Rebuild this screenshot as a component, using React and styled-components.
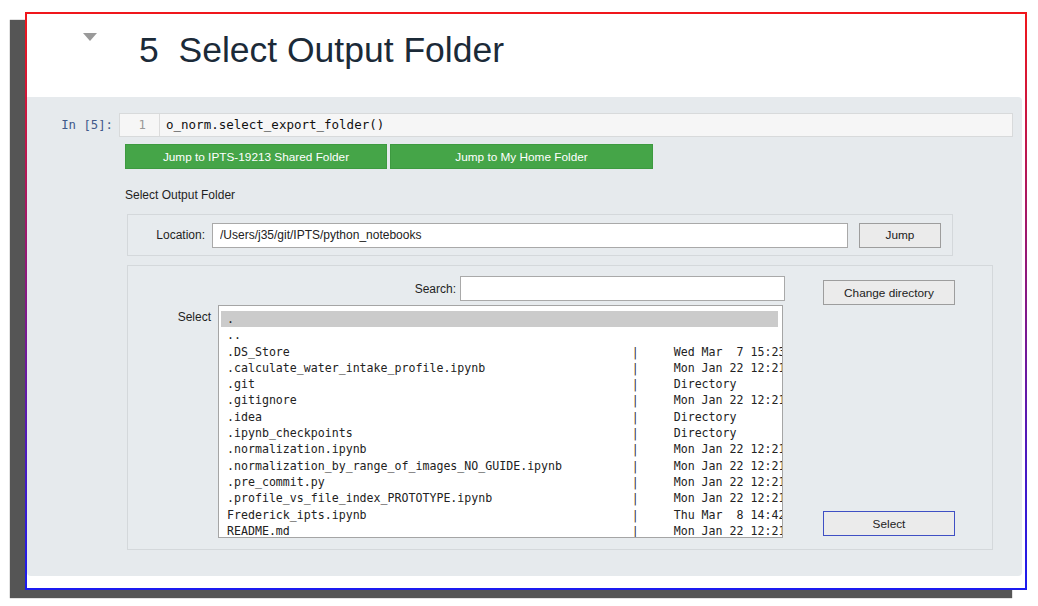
import styled, { createGlobalStyle } from 'styled-components';

const GlobalStyle = createGlobalStyle`
  body {
    margin: 0;
    background: #fff;
    font-family: 'Liberation Sans', Arial, sans-serif;
  }
`;

const files = [
  ['.', null],
  ['..', null],
  ['.DS_Store', 'Wed Mar  7 15:23:41 2018'],
  ['.calculate_water_intake_profile.ipynb', 'Mon Jan 22 12:21:07 2018'],
  ['.git', 'Directory'],
  ['.gitignore', 'Mon Jan 22 12:21:07 2018'],
  ['.idea', 'Directory'],
  ['.ipynb_checkpoints', 'Directory'],
  ['.normalization.ipynb', 'Mon Jan 22 12:21:07 2018'],
  ['.normalization_by_range_of_images_NO_GUIDE.ipynb', 'Mon Jan 22 12:21:07 2018'],
  ['.pre_commit.py', 'Mon Jan 22 12:21:07 2018'],
  ['.profile_vs_file_index_PROTOTYPE.ipynb', 'Mon Jan 22 12:21:07 2018'],
  ['Frederick_ipts.ipynb', 'Thu Mar  8 14:42:10 2018'],
  ['README.md', 'Mon Jan 22 12:21:07 2018'],
];

const App = () => {
  return (
    <Page>
      <GlobalStyle />
      <Frame>
        <Header>
          <Caret />
          <Title>5&nbsp;&nbsp;Select Output Folder</Title>
        </Header>
        <Cell>
          <InputRow>
            <Prompt>In [5]:</Prompt>
            <CodeBox>
              <Gutter>1</Gutter>
              <Code>o_norm.select_export_folder()</Code>
            </CodeBox>
          </InputRow>
          <Output>
            <ButtonRow>
              <GreenButton $width={262}>Jump to IPTS-19213 Shared Folder</GreenButton>
              <GreenButton $width={263}>Jump to My Home Folder</GreenButton>
            </ButtonRow>
            <FieldLabel>Select Output Folder</FieldLabel>
            <LocationPanel>
              <InlineLabel $width={77}>Location:</InlineLabel>
              <TextInput $width={636} readOnly defaultValue='/Users/j35/git/IPTS/python_notebooks' />
              <GrayButton $width={82} $gap={11}>Jump</GrayButton>
            </LocationPanel>
            <FilePanel>
              <LeftCol>
                <SearchRow>
                  <span>Search:</span>
                  <TextInput $width={325} readOnly defaultValue='' />
                </SearchRow>
                <SelectRow>
                  <InlineLabel $width={83} $top={4}>Select</InlineLabel>
                  <ListBox>
                    {files.map(([name, info], i) => (
                      <Option key={name} $active={i === 0}>
                        <FileName>{name}</FileName>
                        {info && (
                          <>
                            <Sep>|</Sep>
                            <FileInfo>{info}</FileInfo>
                          </>
                        )}
                      </Option>
                    ))}
                  </ListBox>
                </SelectRow>
              </LeftCol>
              <RightCol>
                <GrayButton $width={132}>Change directory</GrayButton>
                <GrayButton $width={132} $focused>Select</GrayButton>
              </RightCol>
            </FilePanel>
          </Output>
        </Cell>
      </Frame>
    </Page>
  );
};

const Page = styled.div`
  min-height: 606px;
  box-sizing: border-box;
  padding: 12px 0 0 25px;
`;

const Frame = styled.div`
  box-sizing: border-box;
  width: 1002px;
  height: 578px;
  border: 2px solid;
  border-image: linear-gradient(to bottom, #f0161b, #1b1bf0) 1;
  background: #fff;
  box-shadow: -15px 8px 1px #555;
  display: flex;
  flex-direction: column;
`;

const Header = styled.div`
  height: 83px;
  box-sizing: border-box;
  padding: 15px 0 0 56px;
  display: flex;
  align-items: flex-start;
`;

const Caret = styled.span`
  width: 0;
  height: 0;
  border-left: 7px solid transparent;
  border-right: 7px solid transparent;
  border-top: 8px solid #9a9a9a;
  margin: 4px 42px 0 0;
`;

const Title = styled.h1`
  margin: 0;
  font: 400 35.5px/42px 'Liberation Sans', Arial, sans-serif;
  color: #1b2a38;
`;

const Cell = styled.div`
  flex: 1;
  margin: 0 3px 12px 0;
  padding: 16px 9px 26px 0;
  background: #e6eaed;
  border-radius: 0 4px 4px 4px;
`;

const InputRow = styled.div`
  display: flex;
  align-items: center;
`;

const Prompt = styled.div`
  width: 92px;
  box-sizing: border-box;
  padding-right: 6px;
  text-align: right;
  font: 12.3px 'DejaVu Sans Mono', monospace;
  color: #40598a;
`;

const CodeBox = styled.div`
  flex: 1;
  display: flex;
  height: 24px;
  box-sizing: border-box;
  border: 1px solid #d8dadb;
  background: #f6f6f6;
`;

const Gutter = styled.div`
  width: 40px;
  box-sizing: border-box;
  padding-right: 13px;
  border-right: 1px solid #dcdcdc;
  text-align: right;
  font: 12.3px/22px 'DejaVu Sans Mono', monospace;
  color: #999;
`;

const Code = styled.div`
  padding-left: 6px;
  font: 12.5px/22px 'DejaVu Sans Mono', monospace;
  color: #111;
`;

const Output = styled.div`
  margin: 7px 0 0 98px;
  display: flex;
  flex-direction: column;
  align-items: flex-start;
`;

const ButtonRow = styled.div`
  display: flex;
  gap: 3px;
`;

const GreenButton = styled.button`
  width: ${(p) => p.$width}px;
  height: 25px;
  padding: 0;
  border: 1px solid #3d9a40;
  background: #45a548;
  color: #fff;
  font: 11.8px 'Liberation Sans', Arial, sans-serif;
`;

const FieldLabel = styled.div`
  margin: 16px 0 9px;
  line-height: 20px;
  font-size: 12px;
  color: #1f1f1f;
`;

const Panel = styled.div`
  box-sizing: border-box;
  margin-left: 2px;
  border: 1px solid #d4d8db;
  background: #e7ebee;
  display: flex;
  font-size: 12px;
  color: #1f1f1f;
`;

const LocationPanel = styled(Panel)`
  width: 826px;
  height: 42px;
  align-items: center;
`;

const FilePanel = styled(Panel)`
  width: 866px;
  margin-top: 9px;
  padding: 10px 0 11px;
`;

const InlineLabel = styled.span`
  width: ${(p) => p.$width}px;
  margin: ${(p) => p.$top || 0}px 7px 0 0;
  line-height: 16px;
  text-align: right;
`;

const TextInput = styled.input`
  width: ${(p) => p.$width}px;
  height: 25px;
  box-sizing: border-box;
  margin: 0;
  padding: 0 7px;
  border: 1px solid #a9a9a9;
  background: #fff;
  font: 12px 'Liberation Sans', Arial, sans-serif;
  color: #222;
  outline: none;
`;

const GrayButton = styled.button`
  width: ${(p) => p.$width}px;
  height: 25px;
  margin-left: ${(p) => p.$gap || 0}px;
  padding: 0;
  border: 1px solid ${(p) => (p.$focused ? '#3f4fc4' : '#9d9d9d')};
  background: #ebebeb;
  color: #222;
  font: 11.8px 'Liberation Sans', Arial, sans-serif;
`;

const LeftCol = styled.div`
  width: 657px;
  display: flex;
  flex-direction: column;
  gap: 4px;
`;

const SearchRow = styled.div`
  display: flex;
  justify-content: flex-end;
  align-items: center;
  gap: 4px;
`;

const SelectRow = styled.div`
  display: flex;
  align-items: flex-start;
`;

const ListBox = styled.div`
  width: 565px;
  height: 233px;
  box-sizing: border-box;
  padding: 5px 0 0 2px;
  border: 1px solid #a5a5a5;
  background: #fff;
  overflow: hidden;
`;

const Option = styled.div`
  width: 557px;
  box-sizing: border-box;
  padding-left: 6px;
  display: flex;
  font: 11.6px/16.3px 'DejaVu Sans Mono', monospace;
  white-space: pre;
  color: #222;
  background: ${(p) => (p.$active ? '#cbcbcb' : 'transparent')};
`;

const FileName = styled.span`
  width: 58ch;
  flex: none;
`;

const Sep = styled.span`
  width: 6ch;
  flex: none;
  color: #333;
`;

const FileInfo = styled.span`
  flex: none;
`;

const RightCol = styled.div`
  margin-left: 38px;
  padding: 4px 0 2px;
  display: flex;
  flex-direction: column;
  justify-content: space-between;
`;

export default App;
